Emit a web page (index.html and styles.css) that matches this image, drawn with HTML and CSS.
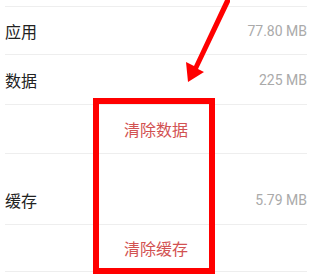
FILE: index.html
```html
<!DOCTYPE html>
<html lang="zh-CN">
<head>
<meta charset="utf-8">
<link rel="stylesheet" href="styles.css">
</head>
<body>
<div class="screen">
  <div class="list">
    <div class="row">
      <span class="label">应用</span>
      <span class="value">77.80 MB</span>
    </div>
    <div class="row row-data">
      <span class="label">数据</span>
      <span class="value">225 MB</span>
    </div>
    <div class="row action">
      <span class="btn">清除数据</span>
    </div>
    <div class="row row-cache">
      <span class="label">缓存</span>
      <span class="value">5.79 MB</span>
    </div>
    <div class="row action">
      <span class="btn">清除缓存</span>
    </div>
  </div>
  <div class="highlight"></div>
  <svg class="arrow" width="60" height="90" viewBox="0 0 60 90">
    <polygon points="55,0 61,0 28,69 34,72 18,82 16,62 24,66" fill="#ff0000"/>
  </svg>
</div>
</body>
</html>
```
FILE: styles.css
```css
html, body {
  margin: 0;
  padding: 0;
  background: #ffffff;
}
.screen {
  position: relative;
  width: 320px;
  height: 277px;
  overflow: hidden;
  font-family: "Noto Sans CJK SC", "Noto Sans", sans-serif;
}
.list {
  margin-left: 5px;
  width: 302px;
  padding-top: 6px;
}
.row {
  display: flex;
  align-items: center;
  justify-content: space-between;
  height: 47px;
  border-top: 1px solid #eeeeee;
}
.row-data {
  height: 49px;
}
.row.action {
  justify-content: center;
  height: 48px;
}
.row-cache {
  height: 71px;
  align-items: flex-start;
  padding-top: 35px;
  box-sizing: border-box;
}
.row:last-child {
  height: 46px;
  border-bottom: 1px solid #eeeeee;
}
.label {
  font-size: 16px;
  color: #222222;
  line-height: 22px;
}
.value {
  font-family: Roboto, "Liberation Sans", sans-serif;
  font-size: 14px;
  color: #aaaaaa;
  line-height: 22px;
}
.btn {
  font-size: 16px;
  color: #d25252;
  line-height: 22px;
}
.highlight {
  position: absolute;
  left: 93px;
  top: 98px;
  width: 110px;
  height: 164px;
  border: 6px solid #ff0000;
}
.arrow {
  position: absolute;
  left: 170px;
  top: 0;
}
```
